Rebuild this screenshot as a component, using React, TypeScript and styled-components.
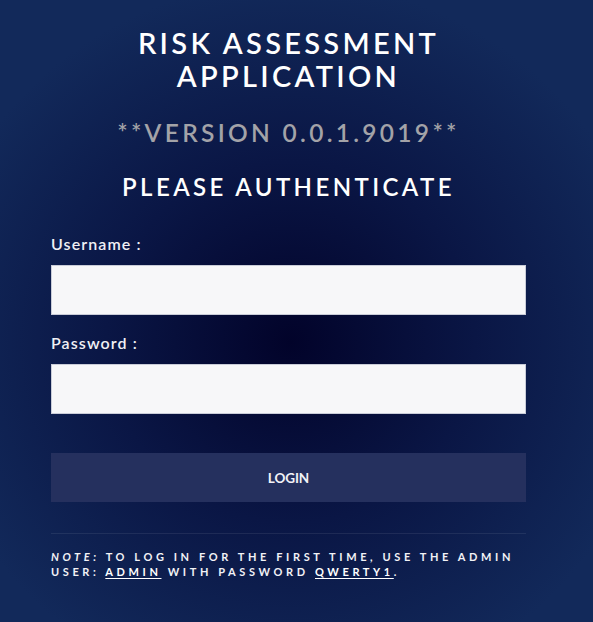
import React from "react";
import styled, { createGlobalStyle } from "styled-components";

const Global = createGlobalStyle`
  html, body { margin: 0; padding: 0; height: 100%; }
  body {
    background: radial-gradient(ellipse 62% 58% at 49% 55%, #02032a 0%, #0a1645 50%, #12295a 100%);
    background-color: #12295a;
    min-height: 622px;
    font-family: "Lato", "Noto Sans", sans-serif;
  }
  #root { min-height: 622px; }
`;

const Page = styled.main`
  display: flex;
  justify-content: center;
  padding: 26px 16px 0 0;
`;

const Panel = styled.div`
  width: 475px;
  display: flex;
  flex-direction: column;
`;

const Title = styled.h1`
  margin: 0;
  text-align: center;
  color: #ffffff;
  font-family: "Lato", sans-serif;
  font-weight: 600;
  font-size: 29px;
  line-height: 33px;
  letter-spacing: 3.3px;
`;

const Version = styled.h2`
  margin: 26px 0 0;
  text-align: center;
  color: #a3a3a8;
  font-family: "Lato", sans-serif;
  font-weight: 600;
  font-size: 24.5px;
  line-height: 30px;
  letter-spacing: 3.3px;
`;

const Subtitle = styled.h2`
  margin: 24px 0 0;
  text-align: center;
  color: #ffffff;
  font-family: "Lato", sans-serif;
  font-weight: 600;
  font-size: 24px;
  line-height: 30px;
  letter-spacing: 3.4px;
`;

const Form = styled.form`
  display: flex;
  flex-direction: column;
  margin-top: 33px;
`;

const Label = styled.label`
  display: block;
  color: #f0f0f4;
  font-family: "Lato", sans-serif;
  font-weight: 600;
  font-size: 16px;
  line-height: 18px;
  letter-spacing: 1.1px;
  margin-bottom: 12px;
`;

const Field = styled.div<{ $gap?: number }>`
  display: flex;
  flex-direction: column;
  margin-top: ${(p) => p.$gap ?? 0}px;
`;

const Input = styled.input`
  box-sizing: border-box;
  width: 100%;
  height: 50px;
  background: #f7f7f9;
  border: 1px solid #c9ccd8;
  outline: none;
  padding: 0 12px;
  font-size: 15px;
`;

const Button = styled.button`
  margin-top: 39px;
  height: 49px;
  background: #25305e;
  border: none;
  color: #f3f3f7;
  font-family: "Lato", sans-serif;
  font-weight: 700;
  font-size: 13.5px;
  letter-spacing: -0.1px;
  cursor: pointer;
`;

const Divider = styled.hr`
  margin: 31px 0 0;
  border: none;
  border-top: 1px solid rgba(255, 255, 255, 0.08);
`;

const Note = styled.p`
  margin: 15px 0 0;
  color: #f2f2f6;
  font-family: "Lato", sans-serif;
  font-weight: 700;
  font-size: 11px;
  line-height: 15px;
  letter-spacing: 3.6px;
  text-transform: uppercase;
`;

const Em = styled.em`
  font-style: italic;
`;

const Link = styled.a`
  color: #ffffff;
  text-decoration: underline;
  text-underline-offset: 2px;
`;

export default function App() {
  return (
    <>
      <Global />
      <Page>
        <Panel>
          <Title>
            RISK ASSESSMENT
            <br />
            APPLICATION
          </Title>
          <Version>**VERSION 0.0.1.9019**</Version>
          <Subtitle>PLEASE AUTHENTICATE</Subtitle>
          <Form onSubmit={(e) => e.preventDefault()}>
            <Field>
              <Label htmlFor="username">Username :</Label>
              <Input id="username" type="text" />
            </Field>
            <Field $gap={19}>
              <Label htmlFor="password">Password :</Label>
              <Input id="password" type="password" />
            </Field>
            <Button type="submit">LOGIN</Button>
          </Form>
          <Divider />
          <Note>
            <Em>Note:</Em> To log in for the first time, use the admin user:{" "}
            <Link href="#">admin</Link> with password <Link href="#">qwerty1</Link>.
          </Note>
        </Panel>
      </Page>
    </>
  );
}
